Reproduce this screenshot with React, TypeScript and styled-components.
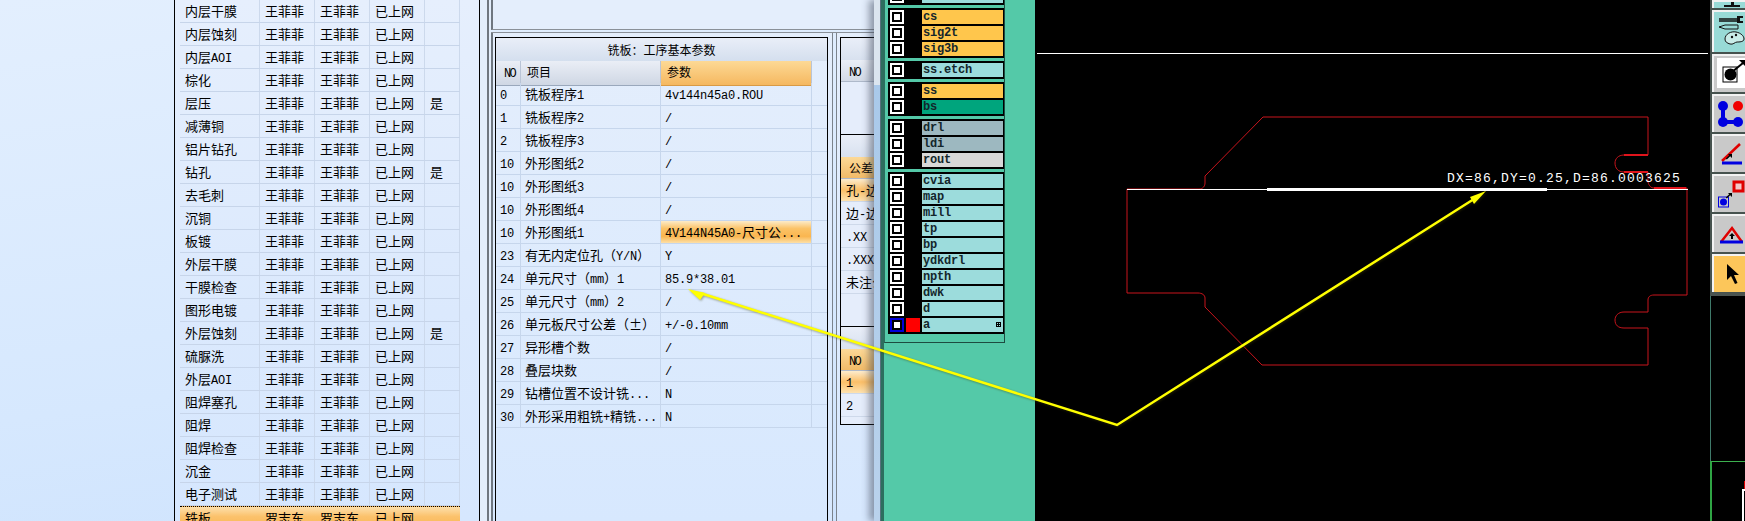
import styled, { createGlobalStyle } from 'styled-components';

const GlobalStyle = createGlobalStyle`
  html, body {
    margin: 0;
    padding: 0;
    background: #000;
    overflow: hidden;
  }
`;

const CJK = `'Noto Sans CJK SC', 'Liberation Mono', monospace`;

const Page = styled.div`
  position: relative;
  display: flex;
  width: 1745px;
  height: 521px;
  overflow: hidden;
  font-family: ${CJK};
  font-size: 13px;
  color: #000;
  background: linear-gradient(172deg, #e3effe 0%, #d6e8fe 55%, #c9e0fd 100%);
`;

const Gutter = styled.div`
  flex: 0 0 174px;
`;

const ListPanel = styled.div`
  flex: 0 0 306px;
  box-sizing: border-box;
  height: 521px;
  padding-left: 5px;
  overflow: hidden;
  border-left: 1.5px solid #000;
  border-right: 1.5px solid #000;
  background: linear-gradient(180deg, #e6effd 0%, #dbe9fd 60%, #d6e7fe 100%);
`;

const ListRow = styled.div<{ $selected?: boolean }>`
  display: grid;
  grid-template-columns: 80px 55px 55px 55px 35px;
  width: 280px;
  height: 23px;
  box-sizing: border-box;
  line-height: 22px;
  border-bottom: 1px solid #c7d5ea;
  background: ${(p) =>
    p.$selected ? 'linear-gradient(180deg, #fde0ac 0%, #fbc26c 45%, #f9b655 100%)' : 'none'};
  border-top: ${(p) => (p.$selected ? '1px dotted #000' : 'none')};
`;

const ListCell = styled.div<{ $selected?: boolean }>`
  box-sizing: border-box;
  padding-left: 5px;
  white-space: nowrap;
  overflow: hidden;
  border-right: 1px solid ${(p) => (p.$selected ? 'transparent' : '#ccd9ec')};
`;

const Splitter = styled.div`
  flex: 0 0 11px;
  box-sizing: border-box;
  height: 521px;
  padding-left: 7px;
  background: #e3eefc;
`;

const SplitBar = styled.div`
  width: 2px;
  height: 100%;
  background: #6f7780;
`;

const Middle = styled.div`
  flex: 0 0 383px;
  display: flex;
  flex-direction: column;
  height: 521px;
  overflow: hidden;
`;

const TopBox = styled.div`
  flex: 0 0 29px;
  border-left: 2px solid #6f7780;
  border-bottom: 1px solid #8a9098;
  background: #e4eefc;
`;

const Groups = styled.div`
  flex: 1;
  display: flex;
  box-sizing: border-box;
  border-top: 1px solid #8a9098;
  margin-top: 2px;
`;

const GroupBox = styled.div`
  flex: 0 0 342px;
  box-sizing: border-box;
  padding: 4px 4px 0 2px;
  border-left: 2px solid #6f7780;
  border-right: 1px solid #7b838c;
  background: linear-gradient(180deg, #e4eefc, #d7e8fe);
`;

const SecondGroup = styled.div`
  flex: 1;
  min-width: 0;
  box-sizing: border-box;
  margin-left: 3px;
  padding: 4px 0 0 3px;
  border-left: 1px solid #7b838c;
  background: linear-gradient(180deg, #e4eefc, #d7e8fe);
`;

const Frame = styled.div`
  box-sizing: border-box;
  height: 100%;
  border: 1px solid #000;
  border-bottom: none;
`;

const SideFrame = styled.div`
  box-sizing: border-box;
  width: 60px;
  height: 388px;
  border: 1px solid #000;
  background: #e5edfb;
`;

const FrameTitle = styled.div`
  height: 23px;
  line-height: 23px;
  text-align: center;
  font-size: 12px;
  background: linear-gradient(180deg, #e9eef8, #d4dfee);
`;

const ParamRow = styled.div`
  display: grid;
  grid-template-columns: 25px 140px 151px;
  height: 23px;
  box-sizing: border-box;
  line-height: 22px;
  border-bottom: 1px solid #c6d6ec;
`;

const HeadRow = styled(ParamRow)`
  height: 22px;
  border-bottom: none;
  font-size: 12px;
`;

const HeadCell = styled.div<{ $active?: boolean; $pad?: number }>`
  box-sizing: border-box;
  padding-left: ${(p) => p.$pad ?? 6}px;
  line-height: 22px;
  border-right: 1px solid #b9c4d6;
  border-bottom: 1px solid ${(p) => (p.$active ? '#d89a45' : '#9aa8bc')};
  background: ${(p) =>
    p.$active
      ? 'linear-gradient(180deg, #fdd995, #f5b860)'
      : 'linear-gradient(180deg, #eaeef6, #cfd7e4)'};
`;

const ParamCell = styled.div<{ $active?: boolean; $pad?: number }>`
  box-sizing: border-box;
  padding-left: ${(p) => p.$pad ?? 4}px;
  white-space: nowrap;
  overflow: hidden;
  border-right: 1px solid #c6d6ec;
  background: ${(p) =>
    p.$active
      ? 'linear-gradient(180deg, #fdebc8 0%, #fbc266 35%, #fab650 70%, #fde0a8 100%)'
      : 'none'};
`;

const Latin = styled.span`
  font-family: 'Liberation Mono', monospace;
  font-size: 12px;
  letter-spacing: -0.2px;
`;

const NoLabel = styled(Latin)`
  letter-spacing: -1.6px;
`;

const SideBlank = styled.div<{ $h: number; $line?: boolean }>`
  height: ${(p) => p.$h}px;
  box-sizing: border-box;
  border-bottom: ${(p) => (p.$line ? '1px solid #000' : 'none')};
`;

const SideTitle = styled.div`
  height: 22px;
  background: linear-gradient(180deg, #e9eef8, #d8e1ef);
`;

const SideHead = styled.div<{ $active?: boolean }>`
  height: 22px;
  box-sizing: border-box;
  line-height: 22px;
  font-size: 12px;
  padding-left: 8px;
  white-space: nowrap;
  border-bottom: 1px solid #aeb9ca;
  background: ${(p) =>
    p.$active
      ? 'linear-gradient(180deg, #fcd997, #f2bb68)'
      : 'linear-gradient(180deg, #eaeef6, #d3dae6)'};
`;

const SideRow = styled.div<{ $active?: boolean }>`
  height: 23px;
  box-sizing: border-box;
  line-height: 22px;
  padding-left: 5px;
  white-space: nowrap;
  overflow: hidden;
  border-bottom: 1px solid #ced9ea;
  background: ${(p) =>
    p.$active ? 'linear-gradient(180deg, #fdeccd 0%, #fbbf68 50%, #fde2b0 100%)' : 'none'};
`;

const EdaWindow = styled.div`
  position: relative;
  flex: 0 0 161px;
  display: flex;
  height: 521px;
  box-shadow: -5px 0 7px rgba(40, 50, 70, 0.45);
`;

const WindowEdge = styled.div`
  flex: 0 0 6px;
  background: linear-gradient(180deg, #dbe5ef 0, #dbe5ef 85px, #a9c9ea 85px, #b9d2ec 100%);
  border-right: 1px solid #56707c;
`;

const WindowBody = styled.div`
  flex: 1;
  display: flex;
  flex-direction: column;
  background: #54c9a8;
  border-left: 3px solid #2c6e5e;
`;

const LayerFrame = styled.div`
  width: 121px;
  height: 343px;
  box-sizing: border-box;
  padding-left: 3px;
  background: #54c9a8;
  border-left: 1px solid #2c6e5e;
  border-right: 1px solid #1d4b40;
  border-bottom: 1px solid #1d4b40;
  overflow: hidden;
`;

const LayerStack = styled.div`
  display: flex;
  flex-direction: column;
  gap: 3px;
  width: 117px;
  margin-top: -13px;
`;

const LayerGroup = styled.div`
  display: flex;
  flex-direction: column;
  gap: 2px;
  padding: 2px;
  background: #000;
`;

const LayerRow = styled.div`
  display: flex;
  gap: 2px;
  height: 14px;
`;

const LayerCheck = styled.div<{ $on?: boolean }>`
  flex: 0 0 14px;
  box-sizing: border-box;
  padding: 2px;
  background: ${(p) => (p.$on ? '#0000d8' : '#fff')};
`;

const LayerCheckInner = styled.div`
  box-sizing: border-box;
  height: 100%;
  border: 2px solid #000;
  background: #fff;
`;

const Swatch = styled.div<{ $color?: string }>`
  flex: 0 0 14px;
  background: ${(p) => p.$color ?? '#000'};
`;

const LayerName = styled.div<{ $color: string }>`
  position: relative;
  flex: 1;
  padding-left: 1px;
  line-height: 15px;
  font-family: 'Liberation Mono', monospace;
  font-size: 12px;
  font-weight: 700;
  letter-spacing: -0.2px;
  color: #13262b;
  background: ${(p) => p.$color};
`;

const ExpandMark = styled.span`
  position: absolute;
  right: 2px;
  top: 4px;
  width: 3px;
  height: 3px;
  border: 1px solid #000;
  background: linear-gradient(#000, #000) center / 100% 1px no-repeat,
    linear-gradient(#000, #000) center / 1px 100% no-repeat;
`;

const Canvas = styled.div`
  position: relative;
  flex: 0 0 675px;
  height: 521px;
  background: #000;
`;

const CanvasDrawing = styled.svg`
  position: absolute;
  inset: 0;
`;

const Measure = styled.div`
  position: absolute;
  left: 412px;
  top: 171px;
  font-family: 'Liberation Mono', monospace;
  font-size: 13px;
  line-height: 16px;
  letter-spacing: 1.2px;
  white-space: nowrap;
  color: #fff;
`;

const ToolColumn = styled.div`
  flex: 1;
  display: flex;
  flex-direction: column;
  height: 521px;
  background: #000;
`;

const ToolStack = styled.div`
  flex: 0 0 296px;
  display: flex;
  flex-direction: column;
  gap: 2px;
  padding-left: 2px;
  border-bottom: 3px solid #4b5450;
  box-sizing: border-box;
  background: #46524e;
`;

const ToolButton = styled.div<{ $tone?: 'grey' | 'teal' | 'orange'; $h?: number }>`
  flex: 0 0 ${(p) => p.$h ?? 38}px;
  box-sizing: border-box;
  border-top: 2px solid #f2f2f2;
  border-left: 2px solid #f2f2f2;
  background: ${(p) =>
    p.$tone === 'teal' ? '#98dad6' : p.$tone === 'orange' ? '#fcc65a' : '#c9c9c9'};
  overflow: hidden;
`;

const ToolIcon = styled.svg`
  display: block;
  margin: -2px 0 0 -2px;
`;

const ToolFill = styled.div`
  flex: 0 0 165px;
  border-left: 1px solid #3f7a6a;
`;

const Preview = styled.div`
  flex: 1;
  position: relative;
  border-top: 1px solid #3cb04e;
  border-left: 2px solid #2fa544;
`;

const PreviewEdge = styled.div`
  position: absolute;
  left: 30px;
  top: 27px;
  bottom: 0;
  right: 0;
  border-left: 2px solid #fff;
  border-top: 2px solid #fff;

  &::before {
    content: '';
    position: absolute;
    left: 0;
    top: -10px;
    width: 2px;
    height: 8px;
    background: #e00000;
  }
`;

const ArrowLayer = styled.svg`
  position: absolute;
  left: 0;
  top: 0;
  pointer-events: none;
  filter: drop-shadow(1px 1px 1px rgba(60, 60, 0, 0.45));
`;

function Mixed({ text }: { text: string }) {
  return (
    <>
      {text.split(/([\x00-\x7f]+)/).map((part, i) =>
        i % 2 ? <Latin key={i}>{part}</Latin> : part,
      )}
    </>
  );
}

const wang = '王菲菲';
const luo = '罗志东';

const steps: [string, string?][] = [
  ['内层干膜'],
  ['内层蚀刻'],
  ['内层AOI'],
  ['棕化'],
  ['层压', '是'],
  ['减薄铜'],
  ['铝片钻孔'],
  ['钻孔', '是'],
  ['去毛刺'],
  ['沉铜'],
  ['板镀'],
  ['外层干膜'],
  ['干膜检查'],
  ['图形电镀'],
  ['外层蚀刻', '是'],
  ['硫脲洗'],
  ['外层AOI'],
  ['阻焊塞孔'],
  ['阻焊'],
  ['阻焊检查'],
  ['沉金'],
  ['电子测试'],
];

// the source table uses full-width brackets and colon
const params: [string, string, string, boolean?][] = [
  ['0', '铣板程序1', '4v144n45a0.ROU'],
  ['1', '铣板程序2', '/'],
  ['2', '铣板程序3', '/'],
  ['10', '外形图纸2', '/'],
  ['10', '外形图纸3', '/'],
  ['10', '外形图纸4', '/'],
  ['10', '外形图纸1', '4V144N45A0-尺寸公...', true],
  ['23', '有无内定位孔\uFF08Y/N\uFF09', 'Y'],
  ['24', '单元尺寸\uFF08mm\uFF091', '85.9*38.01'],
  ['25', '单元尺寸\uFF08mm\uFF092', '/'],
  ['26', '单元板尺寸公差\uFF08\u00B1\uFF09', '+/-0.10mm'],
  ['27', '异形槽个数', '/'],
  ['28', '叠层块数', '/'],
  ['29', '钻槽位置不设计铣...', 'N'],
  ['30', '外形采用粗铣+精铣...', 'N'],
];

const TEAL = '#9cdcdc';
const ORANGE = '#ffc64c';
const SLATE = '#9db8c0';

const layerGroups: { name: string; color: string; on?: boolean }[][] = [
  [{ name: '', color: TEAL }],
  [
    { name: 'cs', color: ORANGE },
    { name: 'sig2t', color: ORANGE },
    { name: 'sig3b', color: ORANGE },
  ],
  [{ name: 'ss.etch', color: TEAL }],
  [
    { name: 'ss', color: ORANGE },
    { name: 'bs', color: '#00a57d' },
  ],
  [
    { name: 'drl', color: SLATE },
    { name: 'ldi', color: SLATE },
    { name: 'rout', color: '#d8d8d8' },
  ],
  [
    { name: 'cvia', color: TEAL },
    { name: 'map', color: TEAL },
    { name: 'mill', color: TEAL },
    { name: 'tp', color: TEAL },
    { name: 'bp', color: TEAL },
    { name: 'ydkdrl', color: TEAL },
    { name: 'npth', color: TEAL },
    { name: 'dwk', color: TEAL },
    { name: 'd', color: TEAL },
    { name: 'a', color: TEAL, on: true },
  ],
];

const outline =
  'M1263 117 L1648 117 L1648 155 L1624 155 C1618 155 1615 159 1615 163 C1615 168 1618 172 1624 172 L1648 172 L1648 182 C1649 186 1651 188 1654 188 L1687 188 L1687 295 L1654 295 C1650 295 1648 297 1648 300 L1648 312 L1624 312 C1618 312 1615 316 1615 320 C1615 325 1618 328 1624 328 L1648 328 L1648 365 L1262 365 L1205 307 L1205 298 C1205 295 1202 293 1198 293 L1127 293 L1127 189 L1199 189 C1203 189 1205 186 1205 183 L1205 176 Z';

function SmallArrow({ x, y }: { x: number; y: number }) {
  return <path d={`M${x} ${y}l-4 0 1.2 1.2-3.4 3.4 1 1 3.4-3.4 1.8 1.8z`} fill="#000" />;
}

export default function App() {
  return (
    <Page>
      <GlobalStyle />
      <Gutter />

      <ListPanel>
        {steps.map(([name, flag]) => (
          <ListRow key={name}>
            <ListCell><Mixed text={name} /></ListCell>
            <ListCell>{wang}</ListCell>
            <ListCell>{wang}</ListCell>
            <ListCell>已上网</ListCell>
            <ListCell>{flag}</ListCell>
          </ListRow>
        ))}
        <ListRow $selected>
          <ListCell $selected>铣板</ListCell>
          <ListCell $selected>{luo}</ListCell>
          <ListCell $selected>{luo}</ListCell>
          <ListCell $selected>已上网</ListCell>
          <ListCell $selected />
        </ListRow>
      </ListPanel>

      <Splitter><SplitBar /></Splitter>

      <Middle>
        <TopBox />
        <Groups>
          <GroupBox>
            <Frame>
              <FrameTitle>{'铣板\uFF1A工序基本参数'}</FrameTitle>
              <HeadRow>
                <HeadCell $pad={8}><NoLabel>NO</NoLabel></HeadCell>
                <HeadCell>项目</HeadCell>
                <HeadCell $active>参数</HeadCell>
              </HeadRow>
              {params.map(([no, item, value, active]) => (
                <ParamRow key={no + item}>
                  <ParamCell $pad={4}><Latin>{no}</Latin></ParamCell>
                  <ParamCell><Mixed text={item} /></ParamCell>
                  <ParamCell $active={active}><Mixed text={value} /></ParamCell>
                </ParamRow>
              ))}
            </Frame>
          </GroupBox>
          <SecondGroup>
            <SideFrame>
              <SideTitle />
              <SideHead><NoLabel>NO</NoLabel></SideHead>
              <SideBlank $h={53} $line />
              <SideTitle />
              <SideHead $active>公差</SideHead>
              <SideRow $active><Mixed text="孔-边距" /></SideRow>
              <SideRow><Mixed text="边-边距" /></SideRow>
              <SideRow><Latin>.XX</Latin></SideRow>
              <SideRow><Latin>.XXX</Latin></SideRow>
              <SideRow>未注公差</SideRow>
              <SideBlank $h={33} $line />
              <SideTitle />
              <SideHead $active><NoLabel>NO</NoLabel></SideHead>
              <SideRow $active><Latin>1</Latin></SideRow>
              <SideRow><Latin>2</Latin></SideRow>
            </SideFrame>
          </SecondGroup>
        </Groups>
      </Middle>

      <EdaWindow>
        <WindowEdge />
        <WindowBody>
          <LayerFrame>
            <LayerStack>
              {layerGroups.map((group, g) => (
                <LayerGroup key={g}>
                  {group.map((layer) => (
                    <LayerRow key={layer.name}>
                      <LayerCheck $on={layer.on}><LayerCheckInner /></LayerCheck>
                      <Swatch $color={layer.on ? '#ff0000' : undefined} />
                      <LayerName $color={layer.color}>
                        {layer.name}
                        {layer.on && <ExpandMark />}
                      </LayerName>
                    </LayerRow>
                  ))}
                </LayerGroup>
              ))}
            </LayerStack>
          </LayerFrame>
        </WindowBody>
      </EdaWindow>

      <Canvas>
        <CanvasDrawing width="675" height="521" viewBox="1035 0 675 521">
          <line x1="1037" y1="53.5" x2="1708" y2="53.5" stroke="#fff" />
          <path d={outline} fill="none" stroke="#c8141c" />
          <path d="M1624 155H1648M1624 172H1648M1654 188H1686" stroke="#e0141c" strokeWidth="2" />
          <line x1="1127" y1="189.5" x2="1688" y2="189.5" stroke="#fff" />
          <line x1="1267" y1="189.5" x2="1547" y2="189.5" stroke="#fff" strokeWidth="3" />
        </CanvasDrawing>
        <Measure>DX=86,DY=0.25,D=86.0003625</Measure>
      </Canvas>

      <ToolColumn>
        <ToolStack>
          <ToolButton $tone="teal" $h={8}>
            <ToolIcon width="33" height="8">
              <path d="M12 5h7v-3h3v3h6v2H12z" fill="#111" />
            </ToolIcon>
          </ToolButton>
          <ToolButton $tone="teal" $h={42}>
            <ToolIcon width="33" height="42">
              <path d="M7 9h18M7 11h18" stroke="#111" strokeWidth="1.5" />
              <path d="M25 6h6v2h-3v3h3v2h-6z" fill="#111" />
              <path d="M7 17l6-2h13v4H13z" fill="#98dad6" stroke="#111" />
              <path d="M13 29c0-5 6-8 11-7s8 4 8 7-5 3-7 3-4 3-7 2-5-2-5-5z" fill="#c9ece8" stroke="#111" />
              <circle cx="20" cy="27" r="1.2" fill="#111" />
              <circle cx="24" cy="25" r="1.2" fill="#111" />
            </ToolIcon>
          </ToolButton>
          <ToolButton>
            <ToolIcon width="33" height="38">
              <rect x="5" y="4" width="28" height="30" fill="#fff" />
              <rect x="11" y="13" width="14" height="15" fill="none" stroke="#000" />
              <circle cx="18.5" cy="20.5" r="6" fill="#000" />
              <path d="M20 18L31 9" stroke="#000" strokeWidth="2" />
              <path d="M33 6v6l-6-6z" fill="#000" />
            </ToolIcon>
          </ToolButton>
          <ToolButton>
            <ToolIcon width="33" height="38">
              <path d="M11 12V28H26" fill="none" stroke="#0000e0" strokeWidth="4" />
              <circle cx="11" cy="12" r="5" fill="#0000e0" />
              <circle cx="11" cy="28" r="5" fill="#0000e0" />
              <circle cx="26" cy="28" r="5" fill="#0000e0" />
              <circle cx="26" cy="12" r="5" fill="#f00000" />
            </ToolIcon>
          </ToolButton>
          <ToolButton>
            <ToolIcon width="33" height="38">
              <path d="M10 27L28 10" stroke="#e00000" strokeWidth="2.5" />
              <path d="M10 29H30" stroke="#0000e0" strokeWidth="3" />
              <SmallArrow x={20} y={20} />
            </ToolIcon>
          </ToolButton>
          <ToolButton>
            <ToolIcon width="33" height="38">
              <rect x="22" y="8" width="9" height="9" fill="#f4c8c8" stroke="#e00000" strokeWidth="3" />
              <rect x="6.5" y="23" width="10" height="10" fill="#c9c9c9" stroke="#0000e0" />
              <circle cx="11.5" cy="28" r="3.5" fill="#0000e0" />
              <SmallArrow x={20} y={19} />
            </ToolIcon>
          </ToolButton>
          <ToolButton>
            <ToolIcon width="33" height="38">
              <path d="M9 28L20 14L30 28" fill="none" stroke="#e00000" strokeWidth="2.5" />
              <path d="M8 28H31" stroke="#0000e0" strokeWidth="3" />
              <path d="M20 19l-3 3h2v3h2v-3h2z" fill="#000" />
            </ToolIcon>
          </ToolButton>
          <ToolButton $tone="orange">
            <ToolIcon width="33" height="38">
              <path d="M15 10L15 26L19 22L23 30L25.5 29L22 21L27 21Z" fill="#000" />
            </ToolIcon>
          </ToolButton>
        </ToolStack>
        <ToolFill />
        <Preview><PreviewEdge /></Preview>
      </ToolColumn>

      <ArrowLayer width="1745" height="521" viewBox="0 0 1745 521">
        <path d="M700 293L1117 425L1474 199" fill="none" stroke="#ffff00" strokeWidth="2.5" />
        <path d="M688 289L705 293L700 300Z" fill="#ffff00" />
        <path d="M1486 191L1470 197L1474 204Z" fill="#ffff00" />
      </ArrowLayer>
    </Page>
  );
}
